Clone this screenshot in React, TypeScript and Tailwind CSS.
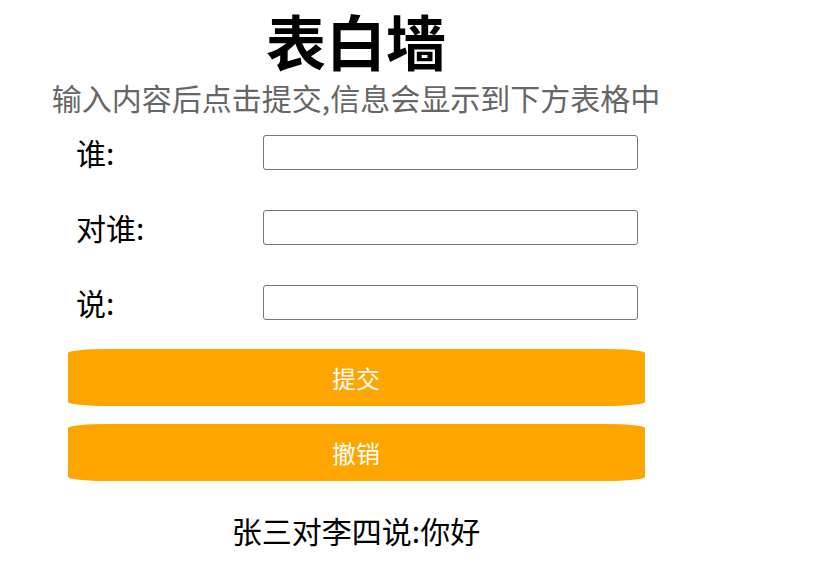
import React from 'react';

const fields = ['谁:', '对谁:', '说:'];

export default function App() {
    return (
        <div className="w-[610px] ml-[51px] bg-white text-black" style={{ fontFamily: '"Noto Sans CJK SC", "Noto Sans", sans-serif' }}>
            <h1 className="text-center text-[60px] font-bold leading-[80px]">表白墙</h1>
            <p className="text-center text-[30px] leading-[35px] text-[#666666] whitespace-nowrap">
                输入内容后点击提交,信息会显示到下方表格中
            </p>
            {fields.map((label) => (
                <div key={label} className="flex items-center h-[75px]">
                    <span className="w-[212px] pl-[25px] text-[30px]">{label}</span>
                    <input className="w-[375px] h-[35px] border border-[#767676] rounded-[3px] px-1 text-[16px]" />
                </div>
            ))}
            <div className="mt-[9px] flex flex-col items-center gap-[18px]">
                <button className="w-[577px] h-[57px] bg-[#ffa500] text-white text-[24px] rounded-[40px/4px]">提交</button>
                <button className="w-[577px] h-[57px] bg-[#ffa500] text-white text-[24px] rounded-[40px/4px]">撤销</button>
            </div>
            <div className="mt-[29px] text-center text-[30px] leading-[40px]">张三对李四说:你好</div>
        </div>
    );
}
